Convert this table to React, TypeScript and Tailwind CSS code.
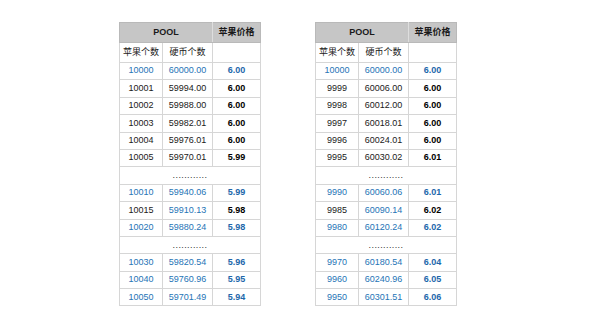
import React from 'react';

type Cell = { v: string; blue?: boolean };
type Row = { dots: true } | { a: Cell; b: Cell; p: Cell };

const r = (a: string, b: string, p: string, ab = false, bb = false, pb = false): Row => ({
  a: { v: a, blue: ab },
  b: { v: b, blue: bb },
  p: { v: p, blue: pb },
});
const dots: Row = { dots: true };

const leftRows: Row[] = [
  r('10000', '60000.00', '6.00', true, true, true),
  r('10001', '59994.00', '6.00'),
  r('10002', '59988.00', '6.00'),
  r('10003', '59982.01', '6.00'),
  r('10004', '59976.01', '6.00'),
  r('10005', '59970.01', '5.99'),
  dots,
  r('10010', '59940.06', '5.99', true, true, true),
  r('10015', '59910.13', '5.98', false, true, false),
  r('10020', '59880.24', '5.98', true, true, true),
  dots,
  r('10030', '59820.54', '5.96', true, true, true),
  r('10040', '59760.96', '5.95', true, true, true),
  r('10050', '59701.49', '5.94', true, true, true),
];

const rightRows: Row[] = [
  r('10000', '60000.00', '6.00', true, true, true),
  r('9999', '60006.00', '6.00'),
  r('9998', '60012.00', '6.00'),
  r('9997', '60018.01', '6.00'),
  r('9996', '60024.01', '6.00'),
  r('9995', '60030.02', '6.01'),
  dots,
  r('9990', '60060.06', '6.01', true, true, true),
  r('9985', '60090.14', '6.02', false, true, false),
  r('9980', '60120.24', '6.02', true, true, true),
  dots,
  r('9970', '60180.54', '6.04', true, true, true),
  r('9960', '60240.96', '6.05', true, true, true),
  r('9950', '60301.51', '6.06', true, true, true),
];

function PoolTable({ rows }: { rows: Row[] }) {
  return (
    <table className="border-collapse border border-[#d6d6d6] text-[9px] text-[#1a1a1a] table-fixed w-[141px]">
      <colgroup>
        <col className="w-[43px]" />
        <col className="w-[50px]" />
        <col className="w-[48px]" />
      </colgroup>
      <thead>
        <tr className="h-[20px] bg-[#c6c6c6]">
          <th colSpan={2} className="border border-[#b9b9b9] border-r-[#dedede] font-bold text-center">
            POOL
          </th>
          <th className="border border-[#b9b9b9] border-l-[#dedede] font-bold text-center">苹果价格</th>
        </tr>
        <tr className="h-[20px]">
          <td className="border border-[#d6d6d6] text-center">苹果个数</td>
          <td className="border border-[#d6d6d6] text-center">硬币个数</td>
          <td className="border border-[#d6d6d6]"></td>
        </tr>
      </thead>
      <tbody>
        {rows.map((row, i) =>
          'dots' in row ? (
            <tr key={i} className="h-[17.4px]">
              <td colSpan={3} className="border border-[#d6d6d6] text-center leading-none text-[#333] tracking-[0.4px]">
                ............
              </td>
            </tr>
          ) : (
            <tr key={i} className="h-[17.4px]">
              <td className={`border border-[#d6d6d6] text-center ${row.a.blue ? 'text-[#2574b6]' : ''}`}>{row.a.v}</td>
              <td className={`border border-[#d6d6d6] text-center ${row.b.blue ? 'text-[#2574b6]' : ''}`}>{row.b.v}</td>
              <td className={`border border-[#d6d6d6] text-center font-bold ${row.p.blue ? 'text-[#1d67ab]' : 'text-black'}`}>
                {row.p.v}
              </td>
            </tr>
          )
        )}
      </tbody>
    </table>
  );
}

export default function App() {
  return (
    <div
      className="w-[600px] h-[328px] bg-white flex items-start gap-[54px] pl-[119px] pt-[22px]"
      style={{ fontFamily: '"Liberation Sans", "Noto Sans CJK SC", sans-serif' }}
    >
      <PoolTable rows={leftRows} />
      <PoolTable rows={rightRows} />
    </div>
  );
}
